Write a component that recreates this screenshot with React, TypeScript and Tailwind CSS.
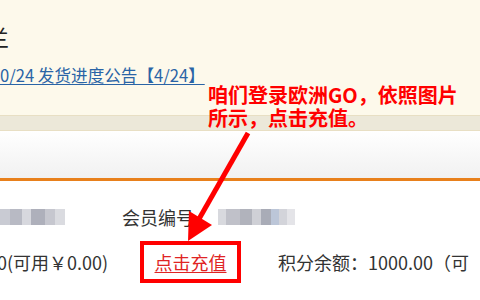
const cjk = { fontFamily: '"Noto Sans CJK SC", "Noto Sans", sans-serif' };

// pixelated placeholder for the masked account name / member id
function Mosaic({ cells }: { cells: [number, string][] }) {
  return (
    <div className="flex h-[16px] blur-[0.6px]">
      {cells.map(([w, c], i) => (
        <span key={i} className="h-full" style={{ width: w, background: c }} />
      ))}
    </div>
  );
}

export default function App() {
  return (
    <div className="relative w-[480px] h-[300px] overflow-hidden bg-white text-[#333]" style={cjk}>
      {/* notice area */}
      <div className="h-[115px] bg-[#fdf9eb] pt-[22px]">
        <div className="ml-[-13px] text-[22px] leading-[28px] text-[#222]">兰</div>
        <a href="#" className="mt-[15px] block w-[204px] whitespace-nowrap text-[16.6px] leading-[20px] text-[#2a64a6] underline underline-offset-2">
          0/24 发货进度公告【4/24】
        </a>
      </div>
      <div className="h-[16px] border-y border-[#e8dfc4] bg-[#ece8d9]" />
      <div className="h-[50px] border-b-[3px] border-[#e8801c] bg-gradient-to-b from-white to-[#f1f1f1]" />

      {/* account info */}
      <div className="pt-[24px] text-[18px] leading-[24px]">
        <div className="flex items-center h-[24px]">
          <div className="w-[122px]">
            <Mosaic cells={[[10, '#c9cbd3'], [12, '#b8bac4'], [9, '#d7d8de'], [14, '#aeb0bb'], [10, '#c6c7cf'], [10, '#dadbe0']]} />
          </div>
          <span className="w-[96px]">会员编号</span>
          <Mosaic cells={[[8, '#d8d9de'], [14, '#c0c1c9'], [12, '#b1b3bc'], [9, '#cfd0d6'], [10, '#a9acb7'], [8, '#bcc6d8'], [8, '#d3d4da'], [8, '#e4e4e8']]} />
        </div>
        <div className="mt-[12px] flex items-center h-[42px]">
          <span className="w-[140px] ml-[-3px] whitespace-nowrap">0(可用￥0.00)</span>
          <div className="flex h-[42px] w-[101px] items-center justify-center border-[4px] border-[#ff0000] ml-[3px]">
            <a href="#" className="text-[18px] text-[#e02424] underline underline-offset-2">点击充值</a>
          </div>
          <span className="ml-[37px] whitespace-nowrap">积分余额：1000.00（可</span>
        </div>
      </div>

      {/* annotation overlay */}
      <div className="absolute left-[208px] top-[83px] whitespace-nowrap text-[20px] font-bold leading-[23px] text-[#ff0000]">
        <div>咱们登录欧洲GO，依照图片</div>
        <div>所示，点击充值。</div>
      </div>
      <svg className="pointer-events-none absolute inset-0" width="480" height="300">
        <line x1="248" y1="133" x2="199" y2="219" stroke="#ff0000" strokeWidth="5" />
        <polygon points="188,241 212,225 189,211" fill="#ff0000" />
      </svg>
    </div>
  );
}
